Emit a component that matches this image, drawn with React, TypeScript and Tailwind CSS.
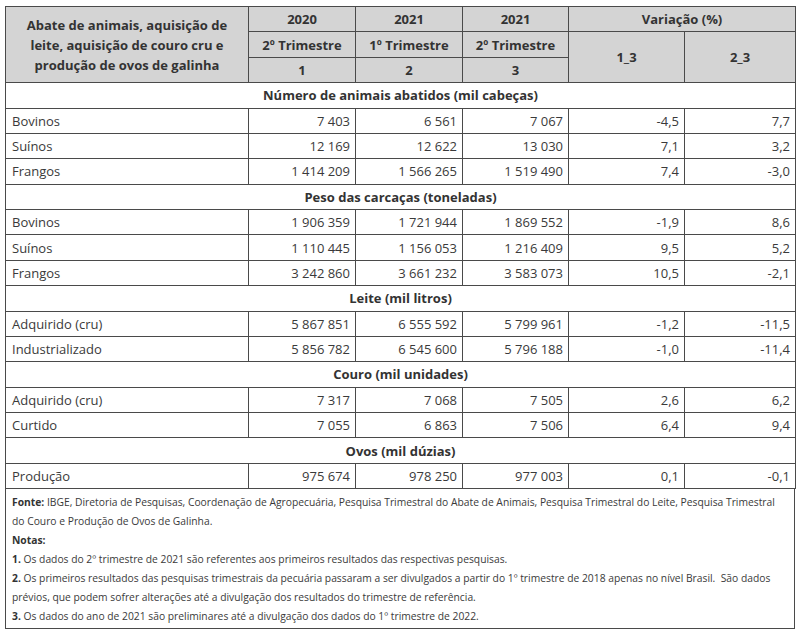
import React from "react";

type Row = { label: string; v: string[] };
type Section = { title: string; rows: Row[] };

const sections: Section[] = [
  {
    title: "Número de animais abatidos (mil cabeças)",
    rows: [
      { label: "Bovinos", v: ["7 403", "6 561", "7 067", "-4,5", "7,7"] },
      { label: "Suínos", v: ["12 169", "12 622", "13 030", "7,1", "3,2"] },
      { label: "Frangos", v: ["1 414 209", "1 566 265", "1 519 490", "7,4", "-3,0"] },
    ],
  },
  {
    title: "Peso das carcaças (toneladas)",
    rows: [
      { label: "Bovinos", v: ["1 906 359", "1 721 944", "1 869 552", "-1,9", "8,6"] },
      { label: "Suínos", v: ["1 110 445", "1 156 053", "1 216 409", "9,5", "5,2"] },
      { label: "Frangos", v: ["3 242 860", "3 661 232", "3 583 073", "10,5", "-2,1"] },
    ],
  },
  {
    title: "Leite (mil litros)",
    rows: [
      { label: "Adquirido (cru)", v: ["5 867 851", "6 555 592", "5 799 961", "-1,2", "-11,5"] },
      { label: "Industrializado", v: ["5 856 782", "6 545 600", "5 796 188", "-1,0", "-11,4"] },
    ],
  },
  {
    title: "Couro (mil unidades)",
    rows: [
      { label: "Adquirido (cru)", v: ["7 317", "7 068", "7 505", "2,6", "6,2"] },
      { label: "Curtido", v: ["7 055", "6 863", "7 506", "6,4", "9,4"] },
    ],
  },
  {
    title: "Ovos (mil dúzias)",
    rows: [{ label: "Produção", v: ["975 674", "978 250", "977 003", "0,1", "-0,1"] }],
  },
];

const hd = "border border-[#4a4a4a] bg-[#d4d4d4] text-center font-bold p-0";
const td = "border border-[#4a4a4a] p-0 pr-[5px] text-right";

export default function App() {
  return (
    <div
      className="w-[799px] h-[635px] bg-white pt-[6px] pl-[5px] text-[#3a3a3a]"
      style={{ fontFamily: '"Open Sans", sans-serif' }}
    >
      <table className="border-collapse table-fixed w-[790px] text-[13px] leading-[18px]">
        <colgroup>
          <col className="w-[243px]" />
          <col className="w-[107px]" />
          <col className="w-[107px]" />
          <col className="w-[106px]" />
          <col className="w-[116px]" />
          <col className="w-[111px]" />
        </colgroup>
        <thead className="text-[#333]">
          <tr className="h-[25.4px]">
            <td rowSpan={3} className={`${hd} leading-[20px] px-[8px]`}>
              Abate de animais, aquisição de leite, aquisição de couro cru e produção de ovos de galinha
            </td>
            <td className={hd}>2020</td>
            <td className={hd}>2021</td>
            <td className={hd}>2021</td>
            <td colSpan={2} className={hd}>
              Variação (%)
            </td>
          </tr>
          <tr className="h-[25.4px]">
            <td className={hd}>2º Trimestre</td>
            <td className={hd}>1º Trimestre</td>
            <td className={hd}>2º Trimestre</td>
            <td rowSpan={2} className={hd}>
              1_3
            </td>
            <td rowSpan={2} className={hd}>
              2_3
            </td>
          </tr>
          <tr className="h-[25.4px]">
            <td className={hd}>1</td>
            <td className={hd}>2</td>
            <td className={hd}>3</td>
          </tr>
        </thead>
        <tbody>
          {sections.map((s) => (
            <React.Fragment key={s.title}>
              <tr className="h-[25.375px]">
                <td colSpan={6} className="border border-[#4a4a4a] p-0 text-center font-bold text-[#333]">
                  {s.title}
                </td>
              </tr>
              {s.rows.map((r) => (
                <tr key={s.title + r.label} className="h-[25.375px]">
                  <td className="border border-[#4a4a4a] p-0 pl-[6px] text-left">{r.label}</td>
                  {r.v.map((x, i) => (
                    <td key={i} className={td}>
                      {x}
                    </td>
                  ))}
                </tr>
              ))}
            </React.Fragment>
          ))}
        </tbody>
      </table>
      <div className="w-[790px] border-x border-b border-[#4a4a4a] pl-[6px] pr-[6px] pt-[4px] pb-[2px] text-[10.3px] leading-[19px] text-[#3a3a3a]">
        <p>
          <b className="text-[#333]">Fonte:</b> IBGE, Diretoria de Pesquisas, Coordenação de Agropecuária, Pesquisa Trimestral do Abate de
          Animais, Pesquisa Trimestral do Leite, Pesquisa Trimestral do Couro e Produção de Ovos de Galinha.
        </p>
        <p>
          <b className="text-[#333]">Notas:</b>
        </p>
        <p>
          <b className="text-[#333]">1.</b> Os dados do 2º trimestre de 2021 são referentes aos primeiros resultados das respectivas pesquisas.
        </p>
        <p>
          <b className="text-[#333]">2.</b> Os primeiros resultados das pesquisas trimestrais da pecuária passaram a ser divulgados a partir do 1º
          trimestre de 2018 apenas no nível Brasil.&nbsp; São dados prévios, que podem sofrer alterações até a divulgação dos resultados do
          trimestre de referência.
        </p>
        <p>
          <b className="text-[#333]">3.</b> Os dados do ano de 2021 são preliminares até a divulgação dos dados do 1º trimestre de 2022.
        </p>
      </div>
    </div>
  );
}
